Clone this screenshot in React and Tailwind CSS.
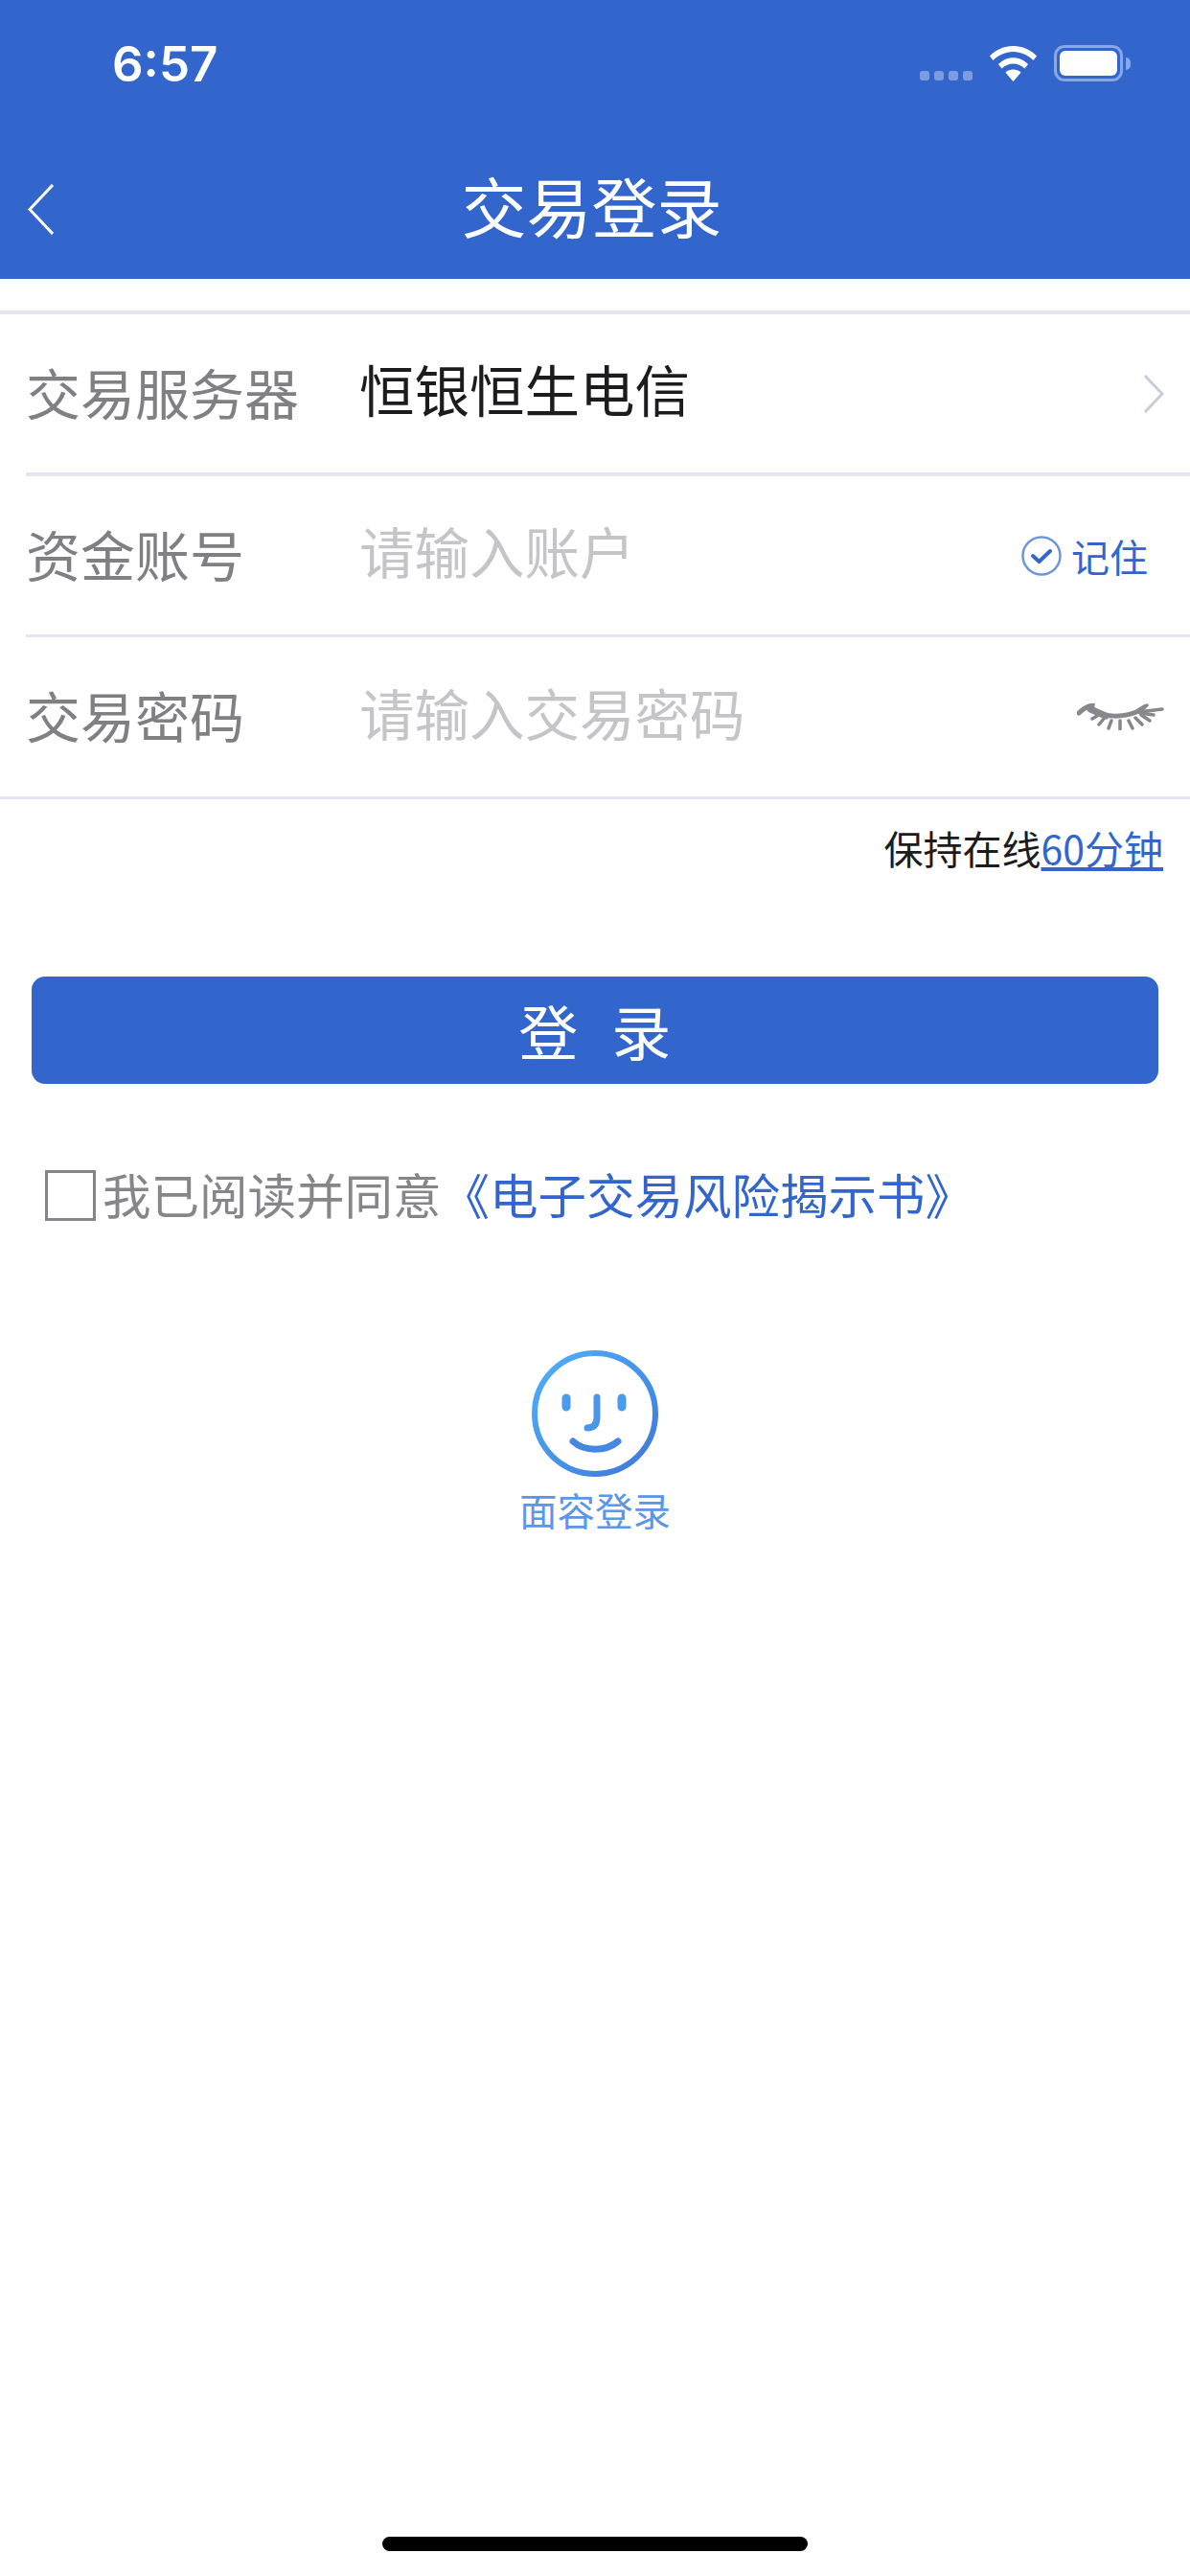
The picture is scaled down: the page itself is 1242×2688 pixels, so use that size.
const cjk = "font-['Noto_Sans_CJK_SC','Liberation_Sans',sans-serif]"

function Wifi() {
  return (
    <svg width="49" height="37" viewBox="0 0 49 37" fill="#fff">
      <path d="M0 10.5C6.500 3.800 15 0 24.500 0S42.500 3.800 49 10.500L45.500 15C40 9.500 32.500 6 24.500 6S9 9.500 3.500 15Z" />
      <path d="M9 19C13 15 18.500 12.300 24.500 12.300S36 15 40 19L36.500 23.500C33.500 20.500 29.200 18.500 24.500 18.500S15.500 20.500 12.500 23.500Z" />
      <path d="M16.500 27.800C18.500 25.800 21.300 24.600 24.500 24.600S30.500 25.800 32.500 27.800L24.500 37Z" />
    </svg>
  )
}

function Battery() {
  return (
    <div className="flex items-center gap-[3px]">
      <div className="w-[72px] h-[38px] rounded-[11px] border-[3px] border-[#8aa6e3] p-[3px]">
        <div className="w-full h-full rounded-[6px] bg-white" />
      </div>
      <div className="w-[5px] h-[13px] rounded-r-full bg-[#8aa6e3]" />
    </div>
  )
}

function Eye() {
  return (
    <svg width="91" height="28" viewBox="0 0 91 28" fill="none" stroke="#87878c" strokeLinecap="round">
      <path d="M2 10C6 6 11 3 16 2C15 6 17 7 21 9C30 14 46 15 62 9L70 4" strokeWidth="5" />
      <path d="M14 6L30 13" strokeWidth="7" />
      <path d="M64 9L89 6M66 10L80 12M66 6L73 2" strokeWidth="3.500" />
      <path d="M21 13L16 16M28 16L23 22M36 18L33 26M45 18V27M54 18L58 26M61 15L68 22M67 12L76 18" strokeWidth="3.500" />
    </svg>
  )
}

function FaceIcon() {
  return (
    <svg width="132" height="132" viewBox="0 0 132 132" fill="none" strokeLinecap="round">
      <defs>
        <linearGradient id="face" x1="0" y1="0" x2="1" y2="1">
          <stop offset="0" stopColor="#4fb0fa" />
          <stop offset="1" stopColor="#3f78d8" />
        </linearGradient>
      </defs>
      <circle cx="66" cy="66" r="63" stroke="url(#face)" strokeWidth="6" />
      <path d="M36 50V59M94 50V59" stroke="#4a9bed" strokeWidth="9" />
      <path d="M68 49V70C68 78 64 81 58 81" stroke="#4a97ea" strokeWidth="7" />
      <path d="M43 95C55 106 77 106 90 95" stroke="#4488e2" strokeWidth="7" />
    </svg>
  )
}

function Row({ label, children, right, heightClass }) {
  return (
    <div className={`${heightClass} flex items-center shrink-0`}>
      <div className="w-[348px] pb-[5px] text-[57px] leading-none text-[#7f7f84]">{label}</div>
      <div className="flex-1 pb-[9px] text-[57.5px] leading-none">{children}</div>
      {right}
    </div>
  )
}

export default function App() {
  return (
    <div className={`relative w-[1242px] h-[2688px] bg-white flex flex-col ${cjk}`}>
      <div className="h-[291px] bg-[#3366cc] text-white shrink-0">
        <div className="h-[130px] pl-[117px] pr-[62px] pt-[37px] flex items-start justify-between">
          <div className="font-['Inter',sans-serif] font-semibold text-[51px] leading-[60px]">6:57</div>
          <div className="flex items-end gap-[18px] pt-[10px]">
            <div className="flex gap-[5px] pb-[1px]">
              <div className="w-[10px] h-[10px] rounded-[3px] bg-[#7d9ce0]" />
              <div className="w-[10px] h-[10px] rounded-[3px] bg-[#7d9ce0]" />
              <div className="w-[10px] h-[10px] rounded-[3px] bg-[#7d9ce0]" />
              <div className="w-[10px] h-[10px] rounded-[3px] bg-[#7d9ce0]" />
            </div>
            <Wifi />
            <Battery />
          </div>
        </div>
        <div className="relative h-[161px] flex items-center justify-center">
          <svg className="absolute left-[29px] top-[62px]" width="27" height="53" viewBox="0 0 27 53" fill="none" stroke="#fff" strokeWidth="3">
            <path d="M26 1L2 26.500L26 52" />
          </svg>
          <div className="text-[68px] leading-none pt-[6px] pr-[7px]">交易登录</div>
        </div>
      </div>

      <div className="mt-[33px] h-[4px] bg-[#e3e5f0] shrink-0" />
      <div className="pl-[27px] pr-[27px]">
        <Row
          heightClass="h-[165px]"
          label="交易服务器"
          right={
            <svg width="21" height="40" viewBox="0 0 21 40" fill="none" stroke="#c7ced9" strokeWidth="3">
              <path d="M1 1L19 20L1 39" />
            </svg>
          }
        >
          <span className="text-[#1c1c1e]">恒银恒生电信</span>
        </Row>
      </div>
      <div className="ml-[27px] h-[4px] bg-[#e3e5f0] shrink-0" />
      <div className="pl-[27px] pr-[44px]">
        <Row
          heightClass="h-[165px]"
          label="资金账号"
          right={
            <div className="flex items-center gap-[10px] text-[#3366cc]">
              <svg width="42" height="42" viewBox="0 0 42 42" fill="none">
                <circle cx="21" cy="21" r="19.500" stroke="#6f94de" strokeWidth="2.500" />
                <path d="M12 21L18.500 27L30 16" stroke="#3366cc" strokeWidth="4" strokeLinecap="round" strokeLinejoin="round" />
              </svg>
              <span className="text-[40px] leading-none">记住</span>
            </div>
          }
        >
          <span className="text-[#c4c4c9]">请输入账户</span>
        </Row>
      </div>
      <div className="ml-[27px] h-[3px] bg-[#e3e5f0] shrink-0" />
      <div className="pl-[27px] pr-[27px]">
        <Row heightClass="h-[166px]" label="交易密码" right={<Eye />}>
          <span className="text-[#c4c4c9]">请输入交易密码</span>
        </Row>
      </div>
      <div className="h-[3px] bg-[#e3e5f0] shrink-0" />

      <div className="pr-[28px] pt-[26px] text-right text-[41px] leading-[48px] text-[#1c1c1e]">
        保持在线<span className="text-[#3366cc] underline">60分钟</span>
      </div>

      <button className="mt-[111px] mx-[33px] h-[112px] shrink-0 pl-[10px] rounded-[14px] bg-[#3366cc] text-white text-[62px] leading-none tracking-[0.17em]">
        登 录
      </button>

      <div className="mt-[84px] pl-[47px] flex items-center">
        <div className="w-[53px] h-[53px] border-[3px] border-[#85858a] shrink-0" />
        <div className="ml-[7px] pb-[5px] text-[50.5px] leading-[60px] text-[#85858a]">
          我已阅读并同意<span className="text-[#3366cc]">《电子交易风险揭示书》</span>
        </div>
      </div>

      <div className="mt-[129px] flex flex-col items-center">
        <FaceIcon />
        <div className="mt-[10px] text-[39.5px] leading-[48px] text-[#5a97ea]">面容登录</div>
      </div>

      <div className="absolute left-[399px] top-[2647px] w-[444px] h-[15px] rounded-full bg-black" />
    </div>
  )
}
